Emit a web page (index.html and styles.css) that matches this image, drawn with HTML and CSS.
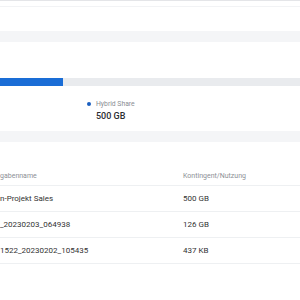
FILE: index.html
```html
<!DOCTYPE html>
<html lang="de">
<head>
<meta charset="utf-8">
<link rel="stylesheet" href="styles.css">
</head>
<body>
<div class="page">
  <div class="card top-card">
    <div class="hairline"></div>
  </div>
  <div class="card usage-card">
    <div class="track"><div class="fill" style="width:63px"></div></div>
    <div class="legend">
      <div class="legend-item">
        <div class="legend-label"><span class="dot"></span>Hybrid Share</div>
        <div class="legend-value">500 GB</div>
      </div>
    </div>
  </div>
  <div class="card table-card">
    <div class="row head">
      <div class="c1">gabenname</div>
      <div class="c2">Kontingent/Nutzung</div>
    </div>
    <div class="row">
      <div class="c1">n-Projekt Sales</div>
      <div class="c2">500 GB</div>
    </div>
    <div class="row">
      <div class="c1">_20230203_064938</div>
      <div class="c2">126 GB</div>
    </div>
    <div class="row">
      <div class="c1">1522_20230202_105435</div>
      <div class="c2">437 KB</div>
    </div>
  </div>
</div>
</body>
</html>
```
FILE: styles.css
```css
html, body {
  margin: 0;
  padding: 0;
  width: 300px;
  height: 300px;
  overflow: hidden;
  background: #f4f5f7;
  font-family: Roboto, "Liberation Sans", sans-serif;
  color: #333;
}
.page {
  display: flex;
  flex-direction: column;
  gap: 11px;
  width: 300px;
}
.card {
  background: #fff;
}
.top-card {
  height: 31px;
  border-top: 1px solid #e4e5e8;
  box-sizing: border-box;
}
.hairline {
  margin-top: 5px;
  height: 1px;
  background: #f2f3f5;
}
.usage-card {
  height: 89px;
  padding-top: 36px;
  box-sizing: border-box;
}
.track {
  height: 8px;
  background: #e9ebee;
}
.fill {
  height: 100%;
  background: #1a6dd6;
}
.legend {
  display: flex;
  margin-top: 14px;
  padding-left: 96px;
}
.legend-label {
  position: relative;
  font-size: 6.8px;
  color: #8a8d93;
  line-height: 8px;
}
.dot {
  position: absolute;
  left: -9px;
  top: 2px;
  width: 4px;
  height: 4px;
  border-radius: 50%;
  background: #1a5fc0;
}
.legend-value {
  margin-top: 3px;
  font-size: 9px;
  font-weight: 500;
  color: #2b2d31;
  line-height: 10px;
}
.table-card {
  padding-top: 25px;
  height: 158px;
  box-sizing: border-box;
}
.row {
  display: flex;
  align-items: center;
  height: 26px;
  border-bottom: 1px solid #eef0f2;
  box-sizing: border-box;
  font-size: 8px;
  color: #333;
}
.row.head {
  height: 19px;
  font-size: 7px;
  color: #8d9096;
  align-items: flex-start;
  padding-top: 5px;
}
.c1 {
  width: 183px;
  white-space: nowrap;
}
.c2 {
  flex: 1;
  white-space: nowrap;
}
```
